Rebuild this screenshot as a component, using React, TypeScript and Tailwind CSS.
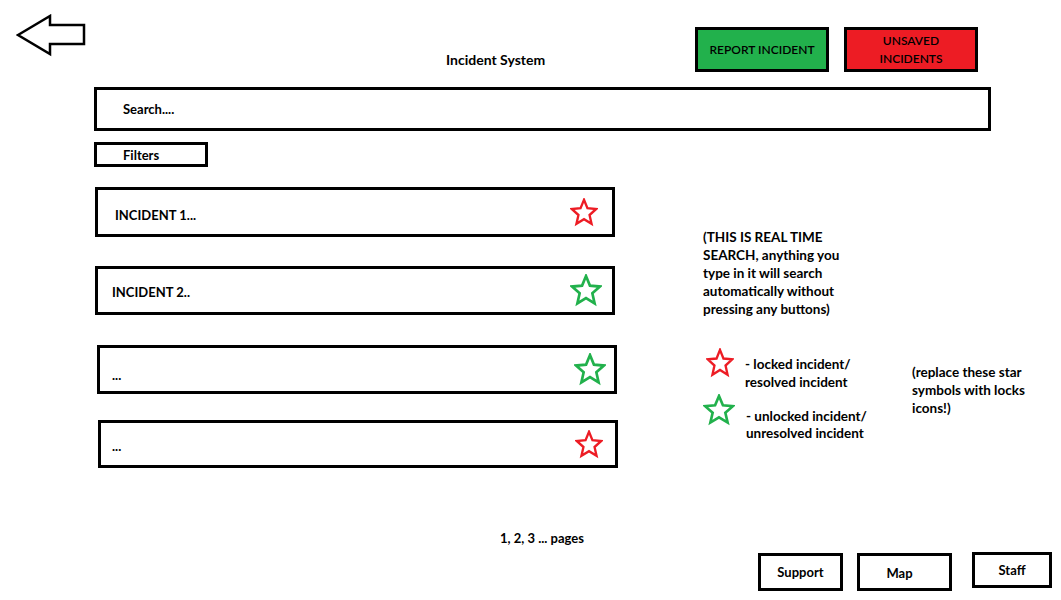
import React from "react";

const Star = ({ color, w, h, className = "" }: { color: string; w: number; h: number; className?: string }) => (
  <svg width={w} height={h} viewBox="0 0 24 24" className={className} preserveAspectRatio="none">
    <polygon
      points="12,1.5 14.94,8.45 22.46,9.1 16.76,14.05 18.47,21.4 12,17.5 5.53,21.4 7.24,14.05 1.54,9.1 9.06,8.45"
      fill="none"
      stroke={color}
      strokeWidth="2"
      strokeLinejoin="miter"
    />
  </svg>
);

const RED = "#ed1c24";
const GREEN = "#22b14c";

export default function App() {
  return (
    <div
      className="w-[1061px] h-[600px] bg-white text-black overflow-hidden text-[13px] font-bold"
      style={{ fontFamily: "Lato, 'Liberation Sans', sans-serif" }}
    >
      {/* Header */}
      <div className="flex items-start h-[87px]">
        <svg width="72" height="44" viewBox="0 0 72 44" className="ml-[16px] mt-[14px]">
          <polygon
            points="2,21 34,2 34,11 68,11 68,30 34,30 34,40"
            fill="white"
            stroke="black"
            strokeWidth="2.5"
          />
        </svg>
        <div className="ml-[358px] mt-[51px] w-[249px] leading-[18px] text-[14px]">Incident System</div>
        <div className="mt-[27px] w-[134px] h-[45px] border-[3px] border-black bg-[#22b14c] flex items-center justify-center text-[12px] font-semibold">
          REPORT INCIDENT
        </div>
        <div className="ml-[15px] mt-[27px] w-[134px] h-[45px] border-[3px] border-black bg-[#ed1c24] flex flex-col items-center justify-center text-[12px] font-semibold leading-[18px]">
          <span>UNSAVED</span>
          <span>INCIDENTS</span>
        </div>
      </div>

      {/* Search */}
      <div className="ml-[94px] w-[897px] h-[44px] border-[3px] border-black flex items-center pl-[26px] pt-[2px]">
        Search....
      </div>
      <div className="ml-[94px] mt-[11px] w-[114px] h-[25px] border-[3px] border-black flex items-center pl-[26px] pt-[2px]">
        Filters
      </div>

      {/* Main */}
      <div className="flex items-start mt-[20px]">
        <div className="w-[618px] flex flex-col">
          <div className="ml-[95px] w-[520px] h-[50px] border-[3px] border-black flex items-center justify-between pl-[17px] pr-[14px]">
            <span className="mt-[7px]">INCIDENT 1...</span>
            <Star color={RED} w={28} h={29} />
          </div>
          <div className="ml-[95px] mt-[29px] w-[520px] h-[49px] border-[3px] border-black flex items-center justify-between pl-[14px] pr-[10px]">
            <span className="mt-[4px]">INCIDENT 2..</span>
            <Star color={GREEN} w={32} h={33} />
          </div>
          <div className="ml-[97px] mt-[30px] w-[520px] h-[49px] border-[3px] border-black flex items-center justify-between pl-[12px] pr-[8px]">
            <span className="mt-[12px]">...</span>
            <Star color={GREEN} w={32} h={33} />
          </div>
          <div className="ml-[98px] mt-[26px] w-[520px] h-[48px] border-[3px] border-black flex items-center justify-between pl-[11px] pr-[12px]">
            <span className="mt-[6px]">...</span>
            <Star color={RED} w={28} h={29} />
          </div>
        </div>

        <div className="ml-[85px] mt-[41px] flex flex-col text-[13.5px]">
          <div className="leading-[18px]">
            (THIS IS REAL TIME
            <br />
            SEARCH, anything you
            <br />
            type in it will search
            <br />
            automatically without
            <br />
            pressing any buttons)
          </div>
          <div className="flex items-start mt-[30px]">
            <div className="w-[209px] flex flex-col">
              <div className="flex items-start">
                <Star color={RED} w={28} h={30} className="ml-[3px]" />
                <div className="ml-[11px] mt-[7px] leading-[18px]">
                  - locked incident/
                  <br />
                  resolved incident
                </div>
              </div>
              <div className="flex items-start mt-[3px]">
                <Star color={GREEN} w={32} h={32} />
                <div className="ml-[11px] mt-[14px] leading-[17px]">
                  - unlocked incident/
                  <br />
                  unresolved incident
                </div>
              </div>
            </div>
            <div className="mt-[15px] leading-[18px]">
              (replace these star
              <br />
              symbols with locks
              <br />
              icons!)
            </div>
          </div>
        </div>
      </div>

      {/* Pagination */}
      <div className="ml-[500px] mt-[62px] leading-[16px]">1, 2, 3 ... pages</div>

      {/* Footer */}
      <div className="flex items-start mt-[6px]">
        <div className="ml-[758px] mt-[1px] w-[85px] h-[38px] border-[3px] border-black flex items-center justify-center pt-[2px]">
          Support
        </div>
        <div className="ml-[14px] mt-[1px] w-[95px] h-[38px] border-[3px] border-black flex items-center justify-center pr-[10px] pt-[4px]">
          Map
        </div>
        <div className="ml-[20px] w-[80px] h-[36px] border-[3px] border-black flex items-center justify-center pt-[2px]">
          Staff
        </div>
      </div>
    </div>
  );
}
